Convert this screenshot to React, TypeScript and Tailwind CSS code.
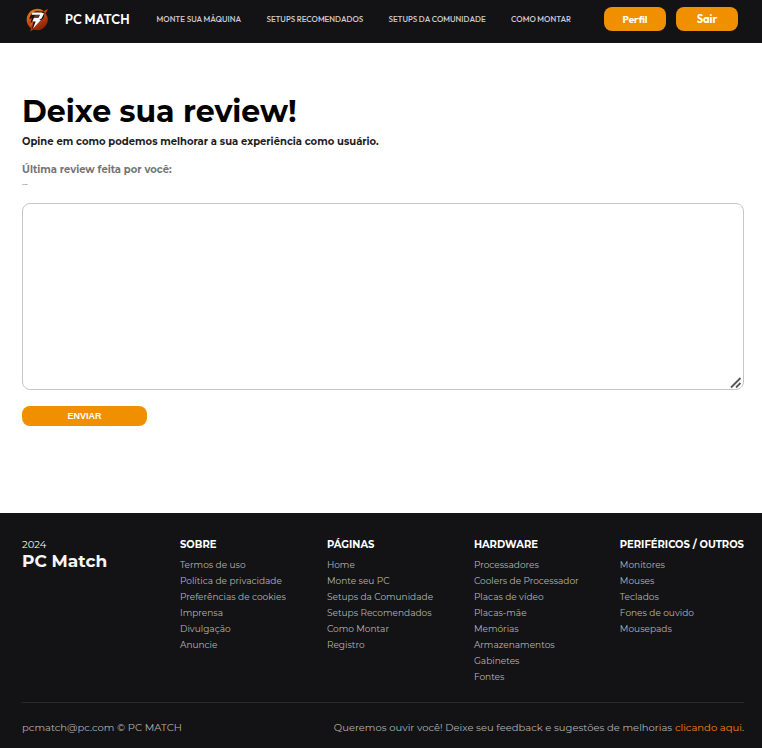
import React from "react";

const navLinks = ["MONTE SUA MÁQUINA", "SETUPS RECOMENDADOS", "SETUPS DA COMUNIDADE", "COMO MONTAR"];

const columns = [
  {
    title: "SOBRE",
    items: ["Termos de uso", "Política de privacidade", "Preferências de cookies", "Imprensa", "Divulgação", "Anuncie"],
  },
  {
    title: "PÁGINAS",
    items: ["Home", "Monte seu PC", "Setups da Comunidade", "Setups Recomendados", "Como Montar", "Registro"],
  },
  {
    title: "HARDWARE",
    items: [
      "Processadores",
      "Coolers de Processador",
      "Placas de vídeo",
      "Placas-mãe",
      "Memórias",
      "Armazenamentos",
      "Gabinetes",
      "Fontes",
    ],
  },
  {
    title: "PERIFÉRICOS / OUTROS",
    items: ["Monitores", "Mouses", "Teclados", "Fones de ouvido", "Mousepads"],
  },
];

function Logo() {
  return (
    <svg viewBox="0 0 30 30" className="size-[30px] shrink-0" aria-hidden="true">
      <defs>
        <linearGradient id="flame" x1="0" y1="0" x2="0.6" y2="1">
          <stop offset="0" stopColor="#f08c18" />
          <stop offset="0.5" stopColor="#cc4a0e" />
          <stop offset="1" stopColor="#802006" />
        </linearGradient>
      </defs>
      <path d="M26 5 22 7A10.300 10.300 0 1 0 9 24.300L8 27.500l4-2A10.300 10.300 0 0 0 23.500 9.500Z" fill="url(#flame)" />
      <path d="M22.500 7.500 18 7.500A8.300 8.300 0 0 0 7.500 15.500L10 14 8.500 18.500l3-.5-1.500 7L22 13.500Z" fill="#280f0a" />
      <path d="m7.500 20.500 4-3.500-2.500 5.500Z" fill="#e05a12" />
      <path d="M10.500 8.500H19.500l2.500 1-2.500 5-2.300 1 1.800.6L11 24.500l2.700-7h-3.400l1.700-3.800h4.500l1.500-3h-8.300Z" fill="#fff" />
      <path d="M13 11h4.200l-1 2h-4.100Z" fill="#5a382e" />
    </svg>
  );
}

export default function App() {
  return (
    <div className="bg-white font-['Montserrat','Inter',sans-serif]">
      <header className="flex items-center bg-[#131315] pt-1 pr-6 pb-[9px] pl-[22px] font-['Outfit','Inter',sans-serif]">
        <a href="#inicio" className="flex items-center gap-[13px] text-[13px] leading-6 font-semibold whitespace-nowrap text-white">
          <Logo />
          PC MATCH
        </a>
        <nav className="flex flex-1 items-center justify-between pr-[33px] pl-[27px]">
          {navLinks.map((label) => (
            <a key={label} href="#nav" className="text-[8px] leading-6 font-medium whitespace-nowrap text-[#d0cbd2]">
              {label}
            </a>
          ))}
        </nav>
        <div className="flex gap-[10px]">
          <button className="h-6 w-[62px] rounded-lg bg-[#f09000] text-[10px] font-bold text-white">Perfil</button>
          <button className="h-6 w-[62px] rounded-lg bg-[#f09000] text-[11px] font-bold text-white">Sair</button>
        </div>
      </header>

      <main className="pt-[49px] pr-[18px] pb-[87px] pl-[22px]">
        <h1 className="text-[30px] leading-10 font-bold text-black">Deixe sua review!</h1>
        <p className="text-[10px] leading-5 font-bold text-[#1d1d1f]">
          Opine em como podemos melhorar a sua experiência como usuário.
        </p>
        <p className="mt-2 text-[10px] leading-5 font-bold text-[#757575]">Última review feita por você:</p>
        <p className="text-[9px] leading-1 text-[#666688]">...</p>
        <form onSubmit={(event) => event.preventDefault()} className="mt-[19px]">
          <div className="relative">
            <textarea
              aria-label="Sua review"
              className="block h-[187px] w-full resize-none rounded-lg border border-[#c6c6c6] bg-white p-2 text-[11px] outline-none"
            />
            <svg
              viewBox="0 0 12 12"
              className="pointer-events-none absolute right-[2px] bottom-px size-3"
              fill="none"
              stroke="#55555c"
              strokeWidth="1.8"
              aria-hidden="true"
            >
              <path d="M1 10.500 10.500 1M6 10.500l4.500-4.500" />
            </svg>
          </div>
          <button className="mt-4 block h-5 w-[125px] rounded-lg bg-[#f09000] pt-px font-['Liberation_Sans',sans-serif] text-[9px] font-bold text-white">
            ENVIAR
          </button>
        </form>
      </main>

      <footer className="bg-[#131315] pt-6 pr-[18px] pb-3 pl-[22px]">
        <div className="grid grid-cols-[158fr_147fr_147fr_146fr_124fr] pb-[17px]">
          <div className="text-[#f5f5f5]">
            <p className="text-[10px] leading-4">2024</p>
            <p className="text-[17px] leading-4 font-bold">PC Match</p>
          </div>
          {columns.map(({ title, items }) => (
            <div key={title} className="whitespace-nowrap">
              <h2 className="text-[10px] leading-4 font-bold text-white">{title}</h2>
              <ul className="mt-1">
                {items.map((item) => (
                  <li key={item} className="text-[9px] leading-4 text-[#b4b4b4]">
                    <a href="#rodape">{item}</a>
                  </li>
                ))}
              </ul>
            </div>
          ))}
        </div>
        <div className="flex items-center justify-between border-t border-[#2a2a2c] pt-[17px] text-[10px] leading-4 text-[#b0b0b0]">
          <p>pcmatch@pc.com © PC MATCH</p>
          <p>
            Queremos ouvir você! Deixe seu feedback e sugestões de melhorias{" "}
            <a href="#feedback" className="text-[#ff8010]">clicando aqui</a>.
          </p>
        </div>
      </footer>
    </div>
  );
}
